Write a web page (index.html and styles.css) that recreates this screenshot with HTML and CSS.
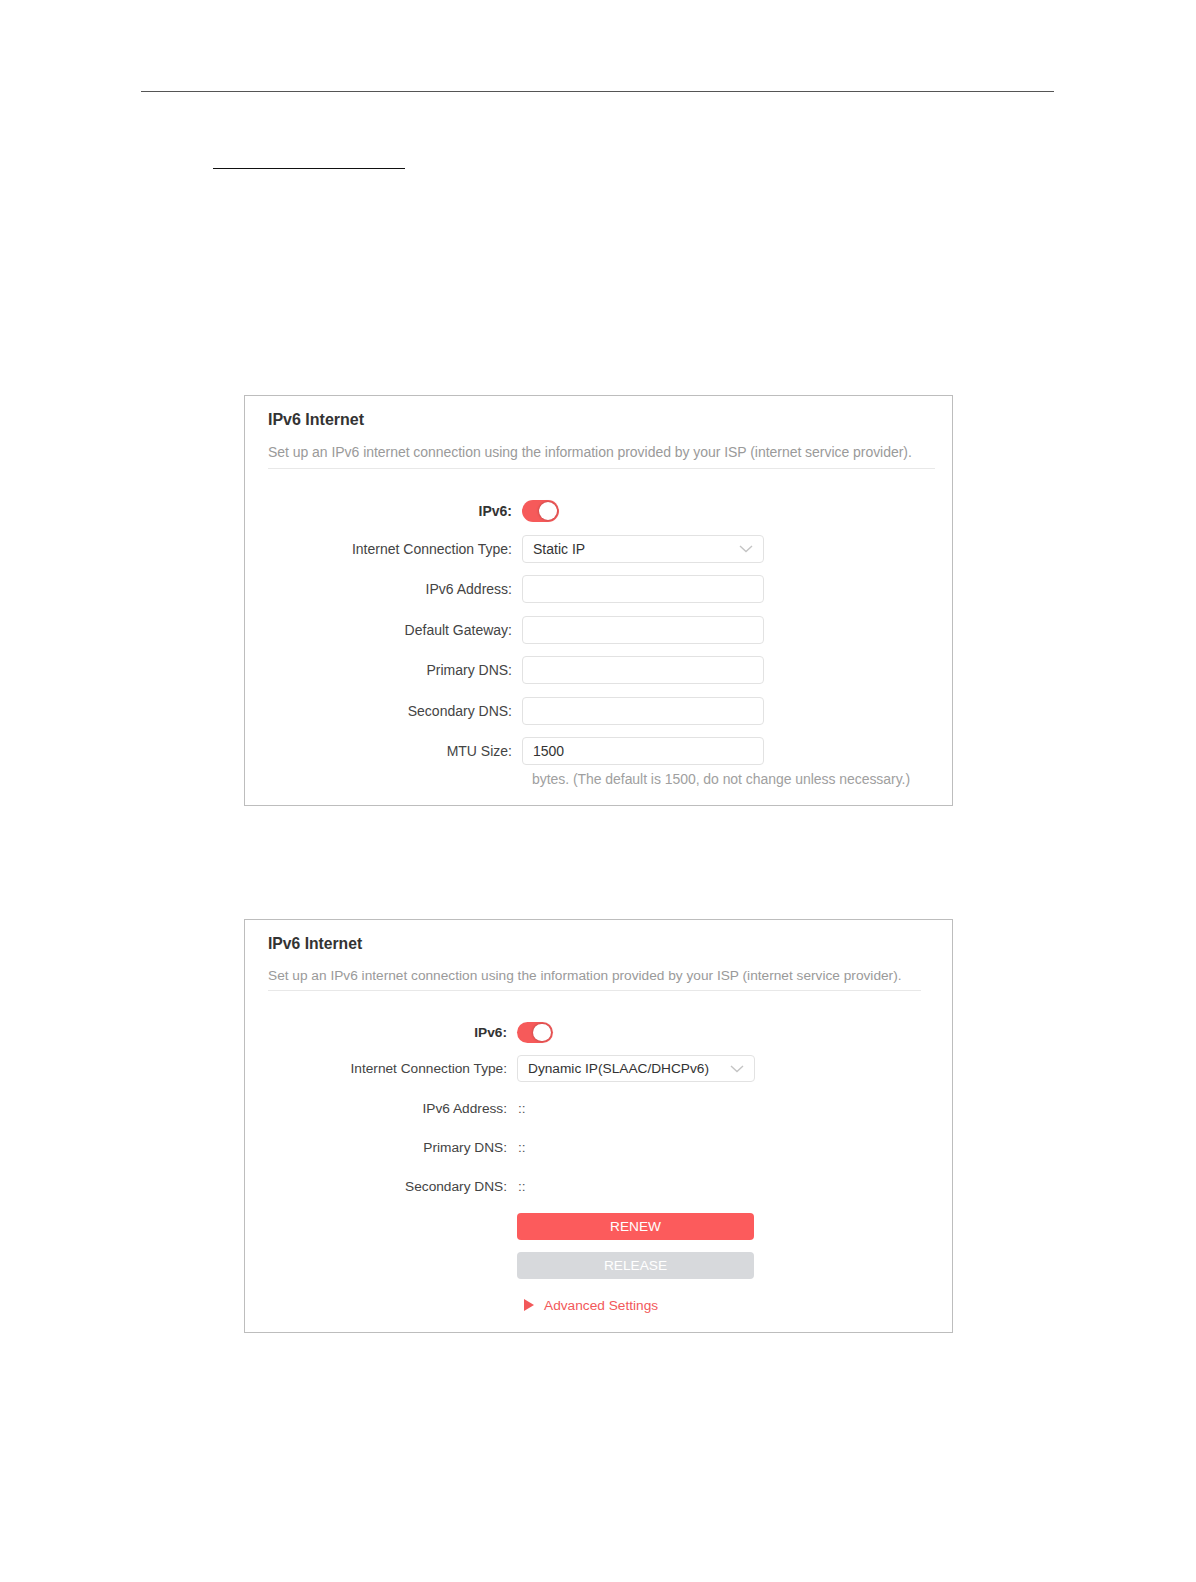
FILE: index.html
```html
<!DOCTYPE html>
<html>
<head>
    <title>IPv6 Internet</title>
    <link rel="stylesheet" href="styles.css">
</head>
<body>
    <div class="page-rule"></div>
    <div class="heading-rule"></div>

    <!-- Static IP -->
    <div class="card">
        <div class="card-title">IPv6 Internet</div>
        <div class="card-desc">Set up an IPv6 internet connection using the information provided by your ISP (internet service provider).</div>
        <div class="rows">
            <div class="row">
                <label class="bold">IPv6:</label>
                <span class="toggle on"><span class="knob"></span></span>
            </div>
            <div class="row">
                <label>Internet Connection Type:</label>
                <div class="select">
                    <span>Static IP</span>
                    <svg width="14" height="8" viewBox="0 0 14 8"><path d="M1 1 L7 6.5 L13 1" fill="none" stroke="#c4c4c4" stroke-width="1.4"/></svg>
                </div>
            </div>
            <div class="row">
                <label for="addr">IPv6 Address:</label>
                <input type="text" id="addr" class="field">
            </div>
            <div class="row">
                <label for="gw">Default Gateway:</label>
                <input type="text" id="gw" class="field">
            </div>
            <div class="row">
                <label for="dns1">Primary DNS:</label>
                <input type="text" id="dns1" class="field">
            </div>
            <div class="row">
                <label for="dns2">Secondary DNS:</label>
                <input type="text" id="dns2" class="field">
            </div>
            <div class="row">
                <label for="mtu">MTU Size:</label>
                <input type="text" id="mtu" class="field" value="1500">
            </div>
        </div>
        <div class="note">bytes. (The default is 1500, do not change unless necessary.)</div>
    </div>

    <!-- Dynamic IP -->
    <div class="card card-small">
        <div class="card-title">IPv6 Internet</div>
        <div class="card-desc">Set up an IPv6 internet connection using the information provided by your ISP (internet service provider).</div>
        <div class="rows">
            <div class="row">
                <label class="bold">IPv6:</label>
                <span class="toggle on"><span class="knob"></span></span>
            </div>
            <div class="row">
                <label>Internet Connection Type:</label>
                <div class="select">
                    <span>Dynamic IP(SLAAC/DHCPv6)</span>
                    <svg width="14" height="8" viewBox="0 0 14 8"><path d="M1 1 L7 6.5 L13 1" fill="none" stroke="#c4c4c4" stroke-width="1.4"/></svg>
                </div>
            </div>
            <div class="row">
                <label>IPv6 Address:</label>
                <span class="value">::</span>
            </div>
            <div class="row">
                <label>Primary DNS:</label>
                <span class="value">::</span>
            </div>
            <div class="row">
                <label>Secondary DNS:</label>
                <span class="value">::</span>
            </div>
            <div class="row">
                <label></label>
                <button class="btn btn-renew">RENEW</button>
            </div>
            <div class="row">
                <label></label>
                <button class="btn btn-release" disabled>RELEASE</button>
            </div>
            <div class="row">
                <label></label>
                <a class="advanced" href="#"><span class="arrow"></span>Advanced Settings</a>
            </div>
        </div>
    </div>
</body>
</html>
```

FILE: styles.css
```css
body {
    margin: 0;
    background-color: #fff;
    font-family: "Liberation Sans", Arial, sans-serif;
    color: #333;
}

.page-rule {
    margin: 91px 0 0 141px;
    width: 913px;
    height: 0;
    border-top: 1px solid #555;
}

.heading-rule {
    margin: 76px 0 0 213px;
    width: 192px;
    height: 0;
    border-top: 1.5px solid #111;
}

.card {
    box-sizing: border-box;
    width: 709px;
    margin: 226px 0 0 244px;
    padding: 14px 17px 16px 23px;
    border: 1px solid #bdbdbd;
}

.card-title {
    font-size: 16px;
    font-weight: bold;
    line-height: 20px;
    color: #333;
}

.card-desc {
    margin-top: 12px;
    padding-bottom: 6px;
    border-bottom: 1px solid #e8e8e8;
    font-size: 14px;
    line-height: 20px;
    letter-spacing: -0.04px;
    color: #9a9a9a;
}

.rows {
    display: flex;
    flex-direction: column;
    gap: 12.5px;
    margin-top: 31px;
}

.row {
    display: flex;
    align-items: center;
    min-height: 22px;
}

.row label {
    flex: 0 0 244px;
    padding-right: 10px;
    text-align: right;
    font-size: 14px;
    color: #444;
}

.row label.bold {
    font-weight: bold;
    color: #333;
}

.toggle {
    position: relative;
    display: inline-block;
    width: 37px;
    height: 22px;
    border-radius: 11px;
    background-color: #f65a5a;
}

.toggle .knob {
    position: absolute;
    top: 2px;
    right: 2px;
    width: 18px;
    height: 18px;
    border-radius: 50%;
    background-color: #fff;
    box-shadow: 0 0 3px rgba(0, 0, 0, 0.3);
}

.field, .select {
    box-sizing: border-box;
    width: 242px;
    height: 28px;
    padding: 0 10px;
    border: 1px solid #e2e2e2;
    border-radius: 4px;
    font-family: "Liberation Sans", Arial, sans-serif;
    font-size: 14px;
    color: #333;
}

.select {
    display: flex;
    align-items: center;
    justify-content: space-between;
}

.note {
    margin-top: 4px;
    padding-left: 264px;
    font-size: 14px;
    line-height: 20px;
    letter-spacing: -0.05px;
    color: #a0a0a0;
}

/* second screenshot is a bit smaller */
.card-small {
    margin-top: 113px;
    padding: 14px 31px 13px 23px;
}

.card-small .card-title {
    font-size: 15.7px;
}

.card-small .card-desc {
    padding-bottom: 4px;
    font-size: 13.7px;
    letter-spacing: 0;
}

.card-small .rows {
    gap: 11.9px;
    margin-top: 30.5px;
}

.card-small .row {
    min-height: 21.6px;
}

.card-small .rows .row:not(:first-child) {
    height: 27.5px;
}

.card-small .row label {
    flex-basis: 239px;
    font-size: 13.7px;
}

.card-small .toggle {
    width: 36px;
    height: 21.6px;
}

.card-small .toggle .knob {
    width: 17.6px;
    height: 17.6px;
}

.card-small .select {
    width: 238px;
    height: 27px;
    font-size: 13.7px;
}

.value {
    padding-left: 1px;
    font-size: 13.7px;
    color: #555;
}

.btn {
    width: 237px;
    height: 27px;
    border: none;
    border-radius: 4px;
    font-family: "Liberation Sans", Arial, sans-serif;
    font-size: 13.7px;
    color: #fff;
}

.btn-renew {
    background-color: #fc5b5c;
}

.btn-release {
    background-color: #d7d9dc;
}

.advanced {
    display: flex;
    align-items: center;
    margin-left: 7px;
    font-size: 13.7px;
    color: #f2585a;
    text-decoration: none;
}

.advanced .arrow {
    width: 0;
    height: 0;
    margin-right: 10px;
    border-top: 6px solid transparent;
    border-bottom: 6px solid transparent;
    border-left: 10px solid #f2585a;
}
```
